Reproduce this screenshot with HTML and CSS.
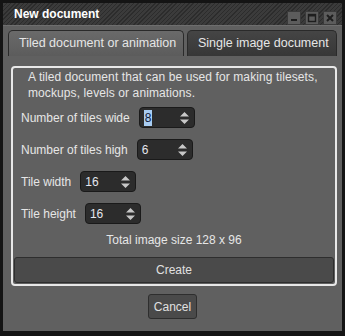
FILE: index.html
```html
<!DOCTYPE html>
<html lang="en">
<head>
    <meta charset="UTF-8">
    <meta name="viewport" content="width=device-width, initial-scale=1.0">
    <title>New document</title>
    <link rel="stylesheet" href="styles.css">
</head>
<body>
    <div class="window">
        <div class="titlebar">
            <span class="title">New document</span>
            <div class="controls">
                <span class="ctl"><svg width="12" height="12" viewBox="0 0 12 12"><rect x="3" y="7" width="6" height="2" fill="#1e1e1e"/></svg></span>
                <span class="ctl"><svg width="12" height="12" viewBox="0 0 12 12"><rect x="2.5" y="2.5" width="7" height="7" fill="none" stroke="#1e1e1e" stroke-width="1.4"/><rect x="2.5" y="2.5" width="7" height="2" fill="#1e1e1e"/></svg></span>
                <span class="ctl"><svg width="12" height="12" viewBox="0 0 12 12"><path d="M3 3 L9 9 M9 3 L3 9" stroke="#1e1e1e" stroke-width="2"/></svg></span>
            </div>
        </div>

        <div class="tabs">
            <div class="tab active">Tiled document or animation</div>
            <div class="tab">Single image document</div>
        </div>

        <div class="panel">
            <p class="desc">A tiled document that can be used for making tilesets, mockups, levels or animations.</p>

            <div class="field">
                <label>Number of tiles wide</label>
                <div class="spin"><span class="val"><span class="sel">8</span></span><svg class="arrows" width="9" height="14" viewBox="0 0 9 14"><path d="M4.5 1 L9 5.5 L0 5.5 Z M0 8.5 L9 8.5 L4.5 13 Z" fill="#c8c8c8"/></svg></div>
            </div>
            <div class="field">
                <label>Number of tiles high</label>
                <div class="spin"><span class="val">6</span><svg class="arrows" width="9" height="14" viewBox="0 0 9 14"><path d="M4.5 1 L9 5.5 L0 5.5 Z M0 8.5 L9 8.5 L4.5 13 Z" fill="#c8c8c8"/></svg></div>
            </div>
            <div class="field">
                <label>Tile width</label>
                <div class="spin"><span class="val">16</span><svg class="arrows" width="9" height="14" viewBox="0 0 9 14"><path d="M4.5 1 L9 5.5 L0 5.5 Z M0 8.5 L9 8.5 L4.5 13 Z" fill="#c8c8c8"/></svg></div>
            </div>
            <div class="field">
                <label>Tile height</label>
                <div class="spin"><span class="val">16</span><svg class="arrows" width="9" height="14" viewBox="0 0 9 14"><path d="M4.5 1 L9 5.5 L0 5.5 Z M0 8.5 L9 8.5 L4.5 13 Z" fill="#c8c8c8"/></svg></div>
            </div>

            <div class="total">Total image size 128 x 96</div>
            <button class="btn create">Create</button>
        </div>

        <div class="footer">
            <button class="btn cancel">Cancel</button>
        </div>
    </div>
</body>
</html>
```

FILE: styles.css
```css
* { box-sizing: border-box; }
body {
    margin: 0;
    background: #141414;
    font-family: "Liberation Sans", Arial, sans-serif;
    font-size: 12px;
    color: #e6e6e6;
}
.window {
    margin: 3px;
    width: 339px;
    height: 328px;
    background: #606060;
}
.titlebar {
    height: 23px;
    display: flex;
    align-items: center;
    justify-content: space-between;
    padding: 0 5px 0 11px;
    background: repeating-linear-gradient(-45deg, #2c2c2c 0 1px, #3b3b3b 1px 3px);
    border-bottom: 1px solid #6e6e6e;
}
.title {
    font-weight: bold;
    color: #fff;
    font-size: 12px;
}
.controls {
    display: flex;
    gap: 4px;
    align-self: flex-end;
}
.ctl {
    width: 14px;
    height: 14px;
    display: flex;
    align-items: center;
    justify-content: center;
    background: #5c5c5c;
    border: 1px solid #3a3a3a;
}
.tabs {
    display: flex;
    gap: 3px;
    margin: 4px 5px 0;
}
.tab {
    height: 26px;
    line-height: 25px;
    padding-left: 10px;
    font-size: 12.5px;
    border: 1px solid #2a2a2a;
    border-bottom: none;
    border-radius: 5px 5px 0 0;
    background: linear-gradient(#454545, #373737);
    width: 150px;
}
.tab.active {
    width: 176px;
    background: linear-gradient(#6a6a6a, #5c5c5c);
}
.panel {
    margin: 10px 5px 0 8px;
    height: 220px;
    border: 2px solid #e8e8e8;
    border-radius: 4px;
    padding: 1px 0 0;
}
.desc {
    margin: 0;
    padding: 0 6px 0 15px;
    line-height: 16px;
    letter-spacing: 0.1px;
}
.field {
    display: flex;
    align-items: center;
    gap: 9px;
    padding-left: 8px;
    margin-top: 11px;
}
.desc + .field { margin-top: 6px; }
.spin {
    width: 56px;
    height: 21px;
    display: flex;
    align-items: center;
    justify-content: space-between;
    padding: 0 5px 0 4px;
    background: #2c2c2c;
    border: 1px solid #1a1a1a;
    border-radius: 4px;
    color: #e4e6ee;
}
.sel {
    background: #a9cdf2;
    color: #10203a;
    padding: 1px 1px;
}
.total {
    text-align: center;
    margin-top: 8px;
    line-height: 16px;
}
.btn {
    font-family: inherit;
    font-size: 12px;
    color: #e0e0e0;
    background: #4a4a4a;
    border: 1px solid #2e2e2e;
    border-radius: 3px;
}
.create {
    display: block;
    width: calc(100% - 2px);
    height: 26px;
    margin: 9px 1px 0;
}
.footer {
    display: flex;
    justify-content: center;
    margin-top: 8px;
}
.cancel {
    width: 49px;
    height: 25px;
    padding: 0;
}
```
